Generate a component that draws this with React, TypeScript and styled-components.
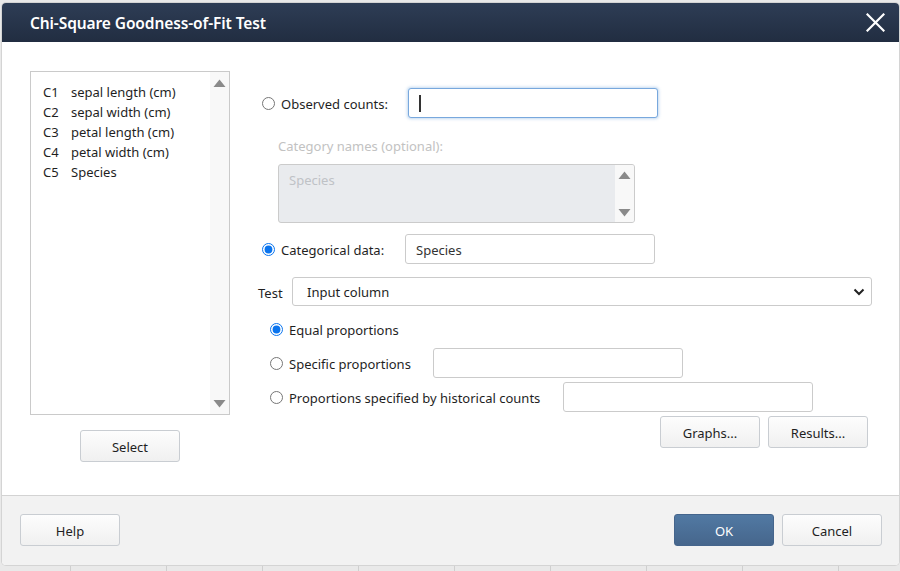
import React from "react";
import styled, { createGlobalStyle } from "styled-components";

const Global = createGlobalStyle`
  html, body { margin: 0; padding: 0; }
  body { font-family: "Noto Sans", "Open Sans", sans-serif; }
  * { box-sizing: border-box; }
`;

const FONT = `"Noto Sans", "Open Sans", sans-serif`;

const Page = styled.div`
  width: 900px;
  height: 571px;
  overflow: hidden;
  padding: 3px 0 0 2px;
  background-color: #e9e9e9;
  background-image: repeating-linear-gradient(
    to right,
    transparent 0px,
    transparent 70px,
    #cfcfcf 70px,
    #cfcfcf 71px,
    transparent 71px,
    transparent 96px
  );
  background-size: 100% 8px;
  background-position: left bottom;
  background-repeat: no-repeat;
`;

const Dialog = styled.div`
  width: 897px;
  height: 562px;
  background: #fff;
  border-radius: 4px;
  overflow: hidden;
  display: flex;
  flex-direction: column;
  box-shadow: 0 0 0 1px #d4d4d4;
  font-family: ${FONT};
  font-size: 13px;
  color: #222;
`;

const Header = styled.div`
  height: 39px;
  flex: none;
  background: linear-gradient(#2e3d55, #212d41);
  display: flex;
  align-items: center;
  justify-content: space-between;
  padding: 0 13px 0 28px;
`;

const Title = styled.h1`
  margin: 0;
  font-family: ${FONT};
  font-weight: 600;
  font-size: 15.5px;
  color: #fff;
  letter-spacing: -0.1px;
`;

const CloseBtn = styled.div`
  width: 22px;
  height: 22px;
  display: flex;
  align-items: center;
  justify-content: center;
`;

const Body = styled.div`
  flex: 1;
  display: flex;
  gap: 28px;
  padding: 29px 0 0 28px;
`;

const LeftCol = styled.div`
  width: 200px;
  display: flex;
  flex-direction: column;
  align-items: center;
  gap: 15px;
`;

const VarList = styled.div`
  width: 200px;
  height: 344px;
  border: 1px solid #cacaca;
  display: flex;
`;

const VarItems = styled.ul`
  flex: 1;
  margin: 0;
  padding: 10px 0 0 12px;
  list-style: none;
`;

const VarItem = styled.li`
  height: 20px;
  line-height: 20px;
  display: flex;
  font-size: 13px;
  color: #1f1f1f;
`;

const ColId = styled.span`
  width: 28px;
`;

const ScrollTrack = styled.div<{ $tall?: boolean }>`
  width: 19px;
  background: #f8f8f8;
  display: flex;
  flex-direction: column;
  justify-content: space-between;
  align-items: center;
  padding: ${(p) => (p.$tall ? "7px 0 6px" : "6px 0 5px")};
`;

const Button = styled.button<{ $primary?: boolean }>`
  width: 100px;
  height: 32px;
  border-radius: 3px;
  font-family: ${FONT};
  font-size: 13px;
  padding: 1px 0 0;
  cursor: pointer;
  border: 1px solid ${(p) => (p.$primary ? "#45658c" : "#c9cdd2")};
  color: ${(p) => (p.$primary ? "#fff" : "#1f1f1f")};
  background: ${(p) =>
    p.$primary
      ? "linear-gradient(#5179a3, #46668c)"
      : "linear-gradient(#fdfdfd, #f0f0f0)"};
`;

const RightCol = styled.div`
  width: 614px;
  display: flex;
  flex-direction: column;
`;

const Row = styled.div<{ $mt: number; $pl?: number; $h?: number }>`
  display: flex;
  align-items: center;
  height: ${(p) => p.$h ?? 30}px;
  margin-top: ${(p) => p.$mt}px;
  padding-left: ${(p) => p.$pl ?? 4}px;
`;

const Radio = styled.input.attrs({ type: "radio" })`
  width: 13px;
  height: 13px;
  margin: 0 6px 0 0;
  accent-color: #0a74ee;
  flex: none;
`;

const Label = styled.label<{ $w?: number }>`
  width: ${(p) => (p.$w ? `${p.$w}px` : "auto")};
  flex: none;
  padding-top: 2px;
  font-size: 13px;
  color: #1f1f1f;
  white-space: nowrap;
`;

const TextBox = styled.div<{ $w: number; $focus?: boolean }>`
  width: ${(p) => p.$w}px;
  height: 30px;
  border-radius: 3px;
  border: 1px solid ${(p) => (p.$focus ? "#78a8dd" : "#cbcbcb")};
  box-shadow: ${(p) => (p.$focus ? "0 0 3px 1px rgba(120,168,221,0.45)" : "none")};
  display: flex;
  align-items: center;
  padding: 1px 0 0 10px;
  font-size: 13px;
  color: #333;
  background: #fff;
`;

const Caret = styled.span`
  width: 2px;
  height: 17px;
  background: #333;
`;

const DisabledLabel = styled.div`
  margin: 19px 0 0 20px;
  height: 18px;
  line-height: 18px;
  color: #c2c2c2;
  font-size: 13px;
`;

const GreyArea = styled.div`
  margin: 9px 0 0 20px;
  width: 357px;
  height: 59px;
  border: 1px solid #cbcbcb;
  border-radius: 3px;
  background: #e9ebee;
  display: flex;
  overflow: hidden;
`;

const GreyText = styled.div`
  flex: 1;
  padding: 6px 0 0 10px;
  color: #bfc2c6;
  font-size: 13px;
`;

const SelectBox = styled.div`
  width: 580px;
  height: 29px;
  border: 1px solid #cbcbcb;
  border-radius: 3px;
  display: flex;
  align-items: center;
  justify-content: space-between;
  padding: 1px 6px 0 14px;
  font-size: 13px;
  color: #1f1f1f;
`;

const ButtonRow = styled.div`
  display: flex;
  justify-content: flex-end;
  gap: 8px;
  margin: 4px 4px 0 0;
`;

const Footer = styled.div`
  height: 70px;
  flex: none;
  background: #f2f2f2;
  border-top: 1px solid #d3d3d3;
  display: flex;
  align-items: flex-start;
  justify-content: space-between;
  padding: 18px 17px 0 18px;
`;

const FooterRight = styled.div`
  display: flex;
  gap: 8px;
`;

const Tri = ({ down }: { down?: boolean }) => (
  <svg width="13" height="9" viewBox="0 0 13 9">
    <path
      d={down ? "M0.5 1 L12.5 1 L6.5 8.5 Z" : "M6.5 0.5 L12.5 8 L0.5 8 Z"}
      fill="#8a8a8a"
    />
  </svg>
);

const vars = [
  ["C1", "sepal length (cm)"],
  ["C2", "sepal width (cm)"],
  ["C3", "petal length (cm)"],
  ["C4", "petal width (cm)"],
  ["C5", "Species"],
];

export default function App() {
  return (
    <>
      <Global />
      <Page>
        <Dialog>
          <Header>
            <Title>Chi-Square Goodness-of-Fit Test</Title>
            <CloseBtn>
              <svg width="19" height="19" viewBox="0 0 19 19">
                <path
                  d="M1.5 1.5 L17.5 17.5 M17.5 1.5 L1.5 17.5"
                  stroke="#fff"
                  strokeWidth="2.2"
                  strokeLinecap="square"
                />
              </svg>
            </CloseBtn>
          </Header>
          <Body>
            <LeftCol>
              <VarList>
                <VarItems>
                  {vars.map(([id, name]) => (
                    <VarItem key={id}>
                      <ColId>{id}</ColId>
                      <span>{name}</span>
                    </VarItem>
                  ))}
                </VarItems>
                <ScrollTrack $tall>
                  <Tri />
                  <Tri down />
                </ScrollTrack>
              </VarList>
              <Button>Select</Button>
            </LeftCol>
            <RightCol>
              <Row $mt={17}>
                <Radio name="src" />
                <Label $w={127}>Observed counts:</Label>
                <TextBox $w={250} $focus>
                  <Caret />
                </TextBox>
              </Row>
              <DisabledLabel>Category names (optional):</DisabledLabel>
              <GreyArea>
                <GreyText>Species</GreyText>
                <ScrollTrack>
                  <Tri />
                  <Tri down />
                </ScrollTrack>
              </GreyArea>
              <Row $mt={11}>
                <Radio name="src" defaultChecked />
                <Label $w={124}>Categorical data:</Label>
                <TextBox $w={250}>Species</TextBox>
              </Row>
              <Row $mt={13} $pl={0} $h={29}>
                <Label $w={34}>Test</Label>
                <SelectBox>
                  <span>Input column</span>
                  <svg width="12" height="8" viewBox="0 0 12 8">
                    <path
                      d="M1.5 1.5 L6 6 L10.5 1.5"
                      stroke="#222"
                      strokeWidth="2"
                      fill="none"
                    />
                  </svg>
                </SelectBox>
              </Row>
              <Row $mt={8} $pl={12}>
                <Radio name="prop" defaultChecked />
                <Label>Equal proportions</Label>
              </Row>
              <Row $mt={4} $pl={12}>
                <Radio name="prop" />
                <Label $w={144}>Specific proportions</Label>
                <TextBox $w={250} />
              </Row>
              <Row $mt={4} $pl={12}>
                <Radio name="prop" />
                <Label $w={274}>Proportions specified by historical counts</Label>
                <TextBox $w={250} />
              </Row>
              <ButtonRow>
                <Button>Graphs...</Button>
                <Button>Results...</Button>
              </ButtonRow>
            </RightCol>
          </Body>
          <Footer>
            <Button>Help</Button>
            <FooterRight>
              <Button $primary>OK</Button>
              <Button>Cancel</Button>
            </FooterRight>
          </Footer>
        </Dialog>
      </Page>
    </>
  );
}
